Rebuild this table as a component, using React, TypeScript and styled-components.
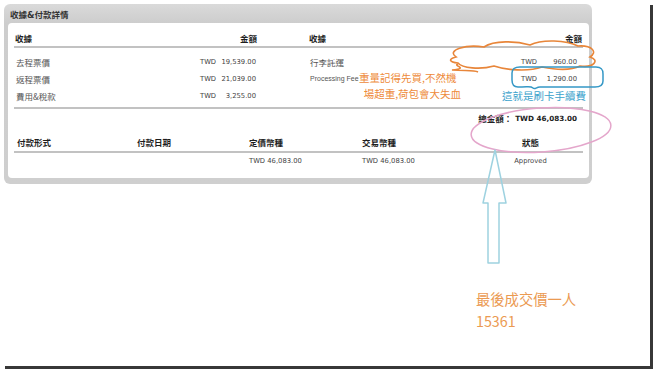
import React from "react";
import styled, { createGlobalStyle } from "styled-components";

const Global = createGlobalStyle`
  html, body { margin: 0; padding: 0; background: #fff; }
  body { font-family: "DejaVu Sans", "Noto Sans CJK TC", sans-serif; }
`;

const Shadow = styled.div`
  position: relative;
  width: 654px;
  height: 371px;
  &::before {
    content: "";
    position: absolute;
    left: 5px;
    top: 5px;
    width: 648px;
    height: 364px;
    background: #383838;
    filter: blur(0.6px);
  }
`;

const Frame = styled.div`
  position: relative;
  z-index: 1;
  width: 650px;
  height: 366px;
  box-sizing: border-box;
  padding: 4px 0 0 4px;
  background: #fff;
`;

const Panel = styled.section`
  width: 588px;
  height: 180px;
  box-sizing: border-box;
  padding: 0 3px 6px 4px;
  border-radius: 6px;
  background: linear-gradient(#dadada, #cdcdcd 19px, #cfcfcf);
  display: flex;
  flex-direction: column;
`;

const PanelTitle = styled.div`
  height: 19px;
  display: flex;
  align-items: center;
  padding-left: 2px;
  font-size: 8.5px;
  font-weight: bold;
  color: #333;
`;

const Card = styled.div`
  flex: 1;
  background: #fff;
  border-radius: 4px;
  padding: 0 6px;
  display: flex;
  flex-direction: column;
`;

const HalfGrid = styled.div<{ $head?: boolean }>`
  display: grid;
  grid-template-columns: 244px 275px;
  column-gap: 50px;
  padding: ${(p) => (p.$head ? "10px 0 3px" : "0")};
  border-bottom: ${(p) => (p.$head ? "2px solid #c2c2c2" : "none")};
`;

const Half = styled.div<{ $head?: boolean }>`
  display: flex;
  justify-content: space-between;
  align-items: center;
  height: ${(p) => (p.$head ? "10px" : "17px")};
`;

const Rows = styled.div`
  padding: 5px 0 3px;
  border-bottom: 2px solid #c2c2c2;
`;

const HeadText = styled.span`
  font-size: 8.5px;
  font-weight: bold;
  color: #1e1e1e;
  padding-left: 1px;
  padding-right: 1px;
`;

const Label = styled.span<{ $latin?: boolean }>`
  font-family: ${(p) =>
    p.$latin ? '"Liberation Sans", sans-serif' : '"Noto Sans CJK TC", sans-serif'};
  font-size: ${(p) => (p.$latin ? "7px" : "8.5px")};
  color: #555;
  padding-left: 2px;
  white-space: nowrap;
`;

const Amount = styled.span<{ $inset: number }>`
  display: inline-flex;
  justify-content: space-between;
  width: 56px;
  margin-right: ${(p) => p.$inset}px;
  font-size: 6.8px;
  color: #444;
  white-space: nowrap;
`;

const TotalRow = styled.div`
  display: flex;
  justify-content: flex-end;
  padding: 4px 6px 0 0;
  line-height: 12px;
  font-size: 7.2px;
  font-weight: bold;
  color: #222;
`;

const TotalLabel = styled.span`
  font-size: 8.5px;
  margin-right: 3px;
`;

const PayGrid = styled.div<{ $head?: boolean }>`
  display: grid;
  grid-template-columns: 120px 112px 113px 119px 105px;
  padding: ${(p) => (p.$head ? "13px 0 3px" : "3px 0 0")};
  border-bottom: ${(p) => (p.$head ? "2px solid #c2c2c2" : "none")};
  line-height: 10px;
`;

const PayCell = styled.span<{ $head?: boolean; $center?: boolean }>`
  padding-left: ${(p) => (p.$center ? "0" : "3px")};
  text-align: ${(p) => (p.$center ? "center" : "left")};
  font-size: ${(p) => (p.$head ? "8.5px" : "6.8px")};
  font-weight: ${(p) => (p.$head ? "bold" : "normal")};
  color: ${(p) => (p.$head ? "#1e1e1e" : "#444")};
  white-space: nowrap;
`;

const Overlay = styled.svg`
  position: absolute;
  left: 0;
  top: 0;
  pointer-events: none;
`;

const Note = styled.div<{ $x: number; $y: number; $color: string; $size: number }>`
  position: absolute;
  left: ${(p) => p.$x}px;
  top: ${(p) => p.$y}px;
  color: ${(p) => p.$color};
  font-size: ${(p) => p.$size}px;
  line-height: 1.55;
  font-family: "Noto Sans CJK TC", "DejaVu Sans", sans-serif;
  white-space: nowrap;
  pointer-events: none;
`;

const Money = ({ v, inset }: { v: string; inset: number }) => (
  <Amount $inset={inset}>
    <span>TWD</span>
    <span>{v}</span>
  </Amount>
);

const left = [
  ["去程票價", "19,539.00"],
  ["返程票價", "21,039.00"],
  ["費用&稅款", "3,255.00"],
];
const right: [string, string, boolean][] = [
  ["行李託運", "960.00", false],
  ["Processing Fee", "1,290.00", true],
];

export default function App() {
  return (
    <>
      <Global />
      <Shadow>
        <Frame>
          <Panel>
            <PanelTitle>收據&amp;付款詳情</PanelTitle>
            <Card>
              <HalfGrid $head>
                <Half $head>
                  <HeadText>收據</HeadText>
                  <HeadText>金額</HeadText>
                </Half>
                <Half $head>
                  <HeadText>收據</HeadText>
                  <HeadText>金額</HeadText>
                </Half>
              </HalfGrid>
              <Rows>
                {left.map((l, i) => (
                  <HalfGrid key={i}>
                    <Half>
                      <Label>{l[0]}</Label>
                      <Money v={l[1]} inset={2} />
                    </Half>
                    <Half>
                      {right[i] ? (
                        <>
                          <Label $latin={right[i][2]}>{right[i][0]}</Label>
                          <Money v={right[i][1]} inset={6} />
                        </>
                      ) : null}
                    </Half>
                  </HalfGrid>
                ))}
              </Rows>
              <TotalRow>
                <TotalLabel>總金額：</TotalLabel>
                <span>TWD 46,083.00</span>
              </TotalRow>
              <PayGrid $head>
                <PayCell $head>付款形式</PayCell>
                <PayCell $head>付款日期</PayCell>
                <PayCell $head>定價幣種</PayCell>
                <PayCell $head>交易幣種</PayCell>
                <PayCell $head $center>狀態</PayCell>
              </PayGrid>
              <PayGrid>
                <PayCell />
                <PayCell />
                <PayCell>TWD 46,083.00</PayCell>
                <PayCell>TWD 46,083.00</PayCell>
                <PayCell $center>Approved</PayCell>
              </PayGrid>
            </Card>
          </Panel>

          <Overlay width="650" height="366" viewBox="0 0 650 366">
            <path
              d="M456,57 C446,50 466,44 484,47 C494,40 516,41 530,45 C542,39 566,40 578,46 C592,45 598,52 590,57 C600,60 594,68 580,66 C570,71 552,69 542,67 C528,72 506,70 494,66 C480,70 462,68 458,63 C449,62 448,59 456,57 Z"
              fill="none"
              stroke="#e8863a"
              strokeWidth="1.6"
            />
            <path
              d="M458,64 C452,66 470,68 452,70 C466,71 474,70 478,72"
              fill="none"
              stroke="#e8863a"
              strokeWidth="1.6"
            />
            <path
              d="M520,67 L596,67 C602,67 603,70 603,74 L603,81 C603,85 600,87 595,87 L540,87 C536,87 535,90 533,88 C531,86 528,87 522,87 L518,87 C514,87 512,84 512,80 L512,73 C512,69 514,67 520,67 Z"
              fill="none"
              stroke="#3598c6"
              strokeWidth="1.5"
            />
            <ellipse
              cx="541"
              cy="130"
              rx="70"
              ry="22"
              transform="rotate(-4 541 130)"
              fill="none"
              stroke="#e4a6cb"
              strokeWidth="1.5"
            />
            <path
              d="M495,150 L506,203 L499,203 L499,263 L488,263 L488,203 L483,203 Z"
              fill="none"
              stroke="#9ed2e0"
              strokeWidth="1.5"
              strokeLinejoin="round"
            />
          </Overlay>

          <Note $x={359} $y={70} $color="#ee8a3a" $size={10.5}>
            重量記得先買,不然機
            <br />
            &nbsp;&nbsp;場超重,荷包會大失血
          </Note>
          <Note $x={502} $y={88} $color="#3aa2cc" $size={10.5}>
            這就是刷卡手續費
          </Note>
          <Note $x={476} $y={288} $color="#eb9a52" $size={14.3}>
            最後成交價一人
            <br />
            15361
          </Note>
        </Frame>
      </Shadow>
    </>
  );
}
